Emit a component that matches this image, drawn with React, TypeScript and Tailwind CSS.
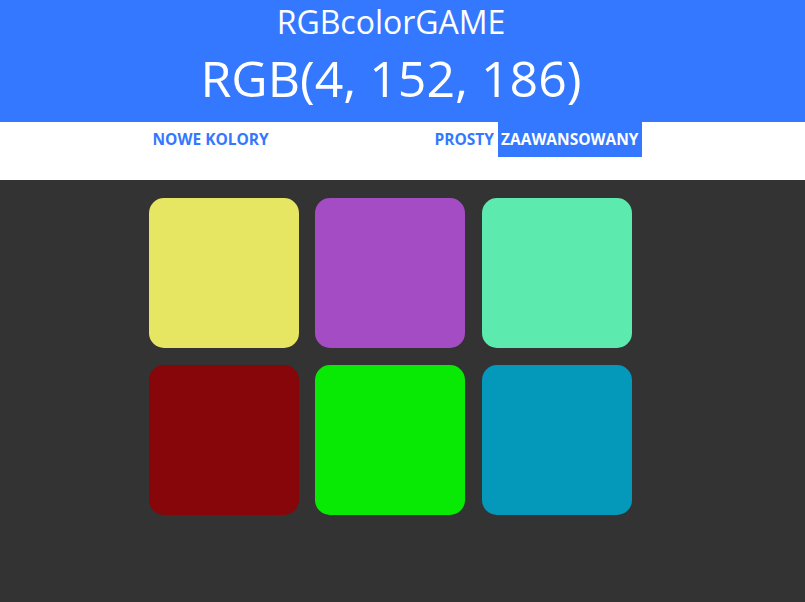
import React from "react";

const colors = ["#e6e662", "#a44cc4", "#5ceaae", "#87060a", "#08ea03", "#0498ba"];

export default function App() {
  return (
    <div className="min-h-[602px] bg-[#333333]" style={{ fontFamily: '"Open Sans", sans-serif' }}>
      <header className="h-[122px] bg-[#3478ff] text-white flex flex-col items-center pr-[23px]">
        <h1 className="text-[32px] leading-[44px] font-normal">RGBcolorGAME</h1>
        <div className="text-[50px] leading-[68px] mt-0">RGB(4, 152, 186)</div>
      </header>
      <nav className="h-[58px] bg-white">
        <div className="w-[500px] mx-auto flex h-[35px] items-center text-[15.5px] font-bold text-[#3478ff]">
          <button className="h-[35px] px-0">NOWE KOLORY</button>
          <div className="ml-auto mr-[11px] flex items-center h-[35px]">
            <button className="h-[35px] px-[3px] mr-[1px]">PROSTY</button>
            <button className="h-[35px] px-[3px] bg-[#3478ff] text-white">ZAAWANSOWANY</button>
          </div>
        </div>
      </nav>
      <main className="flex justify-center pr-[25px] pt-[18px]">
        <div className="grid grid-cols-[150px_150px_150px] gap-x-[16.5px] gap-y-[17px]">
          {colors.map((c) => (
            <div key={c} className="w-[150px] h-[150px] rounded-[15px]" style={{ backgroundColor: c }} />
          ))}
        </div>
      </main>
    </div>
  );
}
